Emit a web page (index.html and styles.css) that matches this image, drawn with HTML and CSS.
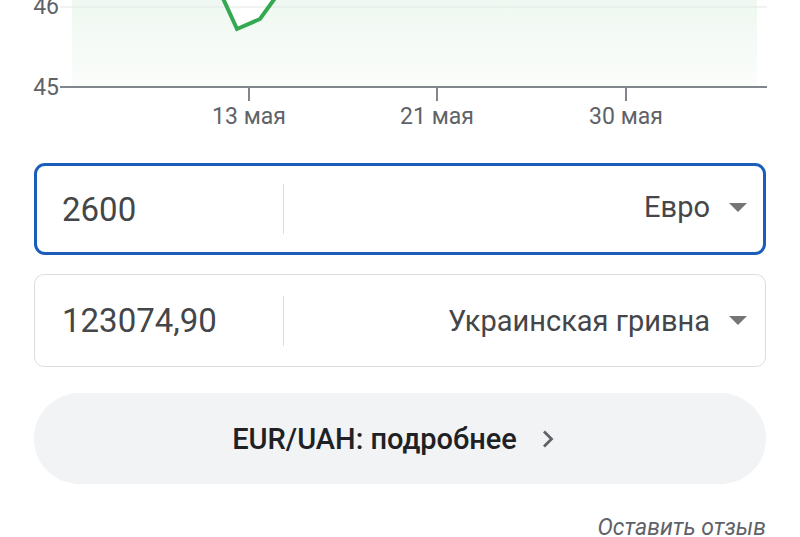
FILE: index.html
```html
<!DOCTYPE html>
<html lang="ru">
<head>
<meta charset="utf-8">
<title>EUR/UAH</title>
<link rel="stylesheet" href="styles.css">
</head>
<body>
<div class="page">
  <svg class="chart" width="800" height="140" viewBox="0 0 800 140" xmlns="http://www.w3.org/2000/svg">
    <defs>
      <linearGradient id="g" x1="0" y1="0" x2="0" y2="1">
        <stop offset="0" stop-color="#e6f4ea"/>
        <stop offset="1" stop-color="#fbfdfb"/>
      </linearGradient>
    </defs>
    <polygon points="72,-60 221,-60 224,-4 237,29 260,19 276,-4 280,-60 757,-60 757,86 72,86" fill="url(#g)"/>
    <line x1="60" y1="7" x2="767" y2="7" stroke="#e3e6e4" stroke-width="1"/>
    <polyline points="221,-6 237,29 260,19 278,-6" fill="none" stroke="#34a853" stroke-width="4" stroke-linejoin="miter"/>
    <line x1="60" y1="87" x2="767" y2="87" stroke="#80868b" stroke-width="2"/>
    <line x1="249" y1="87" x2="249" y2="101" stroke="#80868b" stroke-width="2"/>
    <line x1="437" y1="87" x2="437" y2="101" stroke="#80868b" stroke-width="2"/>
    <line x1="626" y1="87" x2="626" y2="101" stroke="#80868b" stroke-width="2"/>
    <text class="axis" x="59" y="14" text-anchor="end">46</text>
    <text class="axis" x="59" y="95" text-anchor="end">45</text>
    <text class="axis" x="249" y="124" text-anchor="middle">13 мая</text>
    <text class="axis" x="437" y="124" text-anchor="middle">21 мая</text>
    <text class="axis" x="626" y="124" text-anchor="middle">30 мая</text>
  </svg>

  <div class="converter">
    <div class="field field-active">
      <div class="amount">2600</div>
      <div class="divider"></div>
      <div class="currency">
        <span class="cur-name">Евро</span>
        <span class="caret"></span>
      </div>
    </div>
    <div class="field">
      <div class="amount">123074,90</div>
      <div class="divider"></div>
      <div class="currency">
        <span class="cur-name">Украинская гривна</span>
        <span class="caret"></span>
      </div>
    </div>
    <div class="more">
      <span class="more-text">EUR/UAH: подробнее</span>
      <svg class="chev" width="12" height="18" viewBox="0 0 12 18"><polyline points="2,1.5 9.5,9 2,16.5" fill="none" stroke="#5f6368" stroke-width="2.8"/></svg>
    </div>
    <div class="feedback">Оставить отзыв</div>
  </div>
</div>
</body>
</html>
```

FILE: styles.css
```css
html, body {
  margin: 0;
  padding: 0;
  background: #ffffff;
  overflow: hidden;
}
body {
  font-family: Roboto, "Noto Sans", Arial, sans-serif;
  color: #3c4043;
}
.page {
  width: 800px;
  height: 537px;
  overflow: hidden;
}
.chart {
  display: block;
}
.axis {
  font-family: Roboto, sans-serif;
  font-size: 23px;
  fill: #5f6368;
}
.converter {
  padding: 23px 34px 0 34px;
  display: flex;
  flex-direction: column;
}
.field {
  box-sizing: border-box;
  height: 93px;
  border: 1px solid #dadce0;
  border-radius: 10px;
  display: flex;
  align-items: center;
  margin-bottom: 19px;
}
.field-active {
  height: 92px;
  border: 3px solid #1a5dba;
  border-radius: 11px;
}
.amount {
  width: 221px;
  padding-left: 27px;
  font-size: 33px;
  color: #444649;
  flex: none;
}
.field-active .amount {
  padding-left: 25px;
}
.divider {
  width: 1px;
  height: 50px;
  background: #dadce0;
  flex: none;
}
.currency {
  flex: 1;
  display: flex;
  justify-content: flex-end;
  align-items: center;
  padding-right: 18px;
}
.field-active .currency {
  padding-right: 16px;
  margin-top: -4px;
}
.cur-name {
  font-size: 29px;
  color: #444649;
}
.caret {
  width: 0;
  height: 0;
  border-left: 9px solid transparent;
  border-right: 9px solid transparent;
  border-top: 9px solid #757575;
  margin-left: 19px;
}
.more {
  margin-top: 7px;
  height: 91px;
  border-radius: 46px;
  background: #f1f3f4;
  display: flex;
  align-items: center;
  justify-content: center;
  gap: 25px;
  padding-right: 14px;
}
.more-text {
  font-size: 29px;
  font-weight: 500;
  color: #202124;
}
.chev {
  display: block;
}
.feedback {
  margin-top: 30px;
  text-align: right;
  font-size: 23px;
  font-style: italic;
  color: #5f6368;
}
```
